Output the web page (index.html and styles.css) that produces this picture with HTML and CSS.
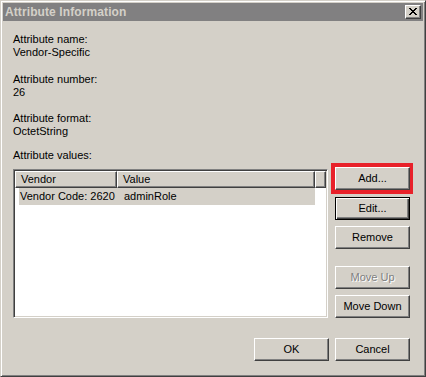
FILE: index.html
```html
<!DOCTYPE html>
<html>
<head>
<meta charset="utf-8">
<title>Attribute Information</title>
<link rel="stylesheet" href="styles.css">
</head>
<body>
<div class="window">
  <div class="titlebar">
    <span class="title">Attribute Information</span>
    <div class="close">
      <svg width="8" height="7" viewBox="0 0 8 7" shape-rendering="crispEdges">
        <path d="M0 0h2v1H0zM6 0h2v1H6zM1 1h2v1H1zM5 1h2v1H5zM2 2h4v1H2zM3 3h2v1H3zM2 4h4v1H2zM1 5h2v1H1zM5 5h2v1H5zM0 6h2v1H0zM6 6h2v1H6z" fill="#000"/>
      </svg>
    </div>
  </div>
  <div class="content">
    <div class="field f1"><div>Attribute name:</div><div>Vendor-Specific</div></div>
    <div class="field f2"><div>Attribute number:</div><div>26</div></div>
    <div class="field f3"><div>Attribute format:</div><div>OctetString</div></div>
    <div class="values-label">Attribute values:</div>
    <div class="values-row">
      <div class="listbox">
        <div class="header">
          <div class="hcol col-vendor">Vendor</div>
          <div class="hcol col-value">Value</div>
          <div class="hcol col-filler"></div>
        </div>
        <div class="row selected">
          <span class="cell cell-vendor">Vendor Code: 2620</span>
          <span class="cell cell-value">adminRole</span>
        </div>
      </div>
      <div class="side">
        <div class="highlight"><div class="btn">Add...</div></div>
        <div class="btn default b-edit">Edit...</div>
        <div class="btn b-remove">Remove</div>
        <div class="btn disabled b-up">Move Up</div>
        <div class="btn b-down">Move Down</div>
      </div>
    </div>
    <div class="footer">
      <div class="btn">OK</div>
      <div class="btn">Cancel</div>
    </div>
  </div>
</div>
</body>
</html>
```

FILE: styles.css
```css
html, body {
  margin: 0;
  padding: 0;
  background: #d4d0c8;
}
body {
  font-family: "Liberation Sans", Arial, sans-serif;
  font-size: 11px;
  line-height: 13px;
  color: #000;
}
.window {
  box-sizing: border-box;
  width: 426px;
  height: 377px;
  background: #d4d0c8;
  border: 1px solid;
  border-color: #d4d0c8 #404040 #404040 #d4d0c8;
  box-shadow: inset 1px 1px 0 #fff, inset -1px -1px 0 #808080;
  padding: 2px;
  display: flex;
  flex-direction: column;
}
.titlebar {
  height: 18px;
  background: #818081;
  display: flex;
  align-items: center;
  justify-content: space-between;
  padding: 0 2px 0 2px;
}
.title {
  font-weight: bold;
  font-size: 12px;
  color: #d4d0c8;
  letter-spacing: 0.1px;
}
.close {
  box-sizing: border-box;
  width: 16px;
  height: 14px;
  background: #d4d0c8;
  border: 1px solid;
  border-color: #fff #404040 #404040 #fff;
  box-shadow: inset -1px -1px 0 #808080;
  display: flex;
  align-items: center;
  justify-content: center;
  padding: 0 1px 1px 0;
}
.close svg { display: block; }
.content {
  padding: 12px 13px 0 10px;
  display: flex;
  flex-direction: column;
}
.field.f1 { margin-bottom: 14px; }
.field.f2 { margin-bottom: 13px; }
.field.f3 { margin-bottom: 11px; }
.values-label { margin-bottom: 5px; }
.values-row {
  display: flex;
  align-items: flex-start;
  gap: 7px;
}
.listbox {
  box-sizing: border-box;
  width: 316px;
  height: 149px;
  margin-top: 2px;
  background: #fff;
  border: 1px solid;
  border-color: #808080 #fff #fff #808080;
  box-shadow: inset 1px 1px 0 #404040, inset -1px -1px 0 #d4d0c8;
  padding: 1px;
}
.header {
  display: flex;
  height: 17px;
}
.hcol {
  box-sizing: border-box;
  height: 17px;
  background: #d4d0c8;
  border: 1px solid;
  border-color: #fff #404040 #404040 #fff;
  box-shadow: inset -1px -1px 0 #808080;
  padding: 1px 0 0 5px;
  line-height: 13px;
}
.col-vendor { width: 102px; }
.col-value { width: 198px; }
.col-filler { flex: 1; }
.row {
  display: flex;
  height: 17px;
  align-items: center;
  margin-left: 4px;
  width: 296px;
}
.row.selected { background: #d4d0c8; }
.cell-vendor { width: 100px; padding-left: 1px; box-sizing: border-box; }
.cell-value { padding-left: 5px; }
.side {
  display: flex;
  flex-direction: column;
}
.btn {
  box-sizing: border-box;
  width: 75px;
  height: 23px;
  background: #d4d0c8;
  border: 1px solid;
  border-color: #fff #404040 #404040 #fff;
  box-shadow: inset -1px -1px 0 #808080;
  display: flex;
  align-items: center;
  justify-content: center;
  padding-bottom: 1px;
}
.btn.default {
  border: 1px solid #000;
  box-shadow: inset 1px 1px 0 #fff, inset -1px -1px 0 #404040, inset -2px -2px 0 #808080;
}
.btn.disabled {
  color: #808080;
  text-shadow: 1px 1px 0 #fff;
}
.highlight {
  position: relative;
}
.highlight::after {
  content: "";
  position: absolute;
  top: -4px;
  left: -4px;
  right: -3px;
  bottom: -4px;
  border: 4px solid #e8212a;
  border-right-width: 3px;
  pointer-events: none;
}
.b-edit { margin-top: 7px; }
.b-remove { margin-top: 6px; }
.b-up { margin-top: 17px; }
.b-down { margin-top: 6px; }
.footer {
  display: flex;
  justify-content: flex-end;
  gap: 6px;
  margin-top: 20px;
}
```
